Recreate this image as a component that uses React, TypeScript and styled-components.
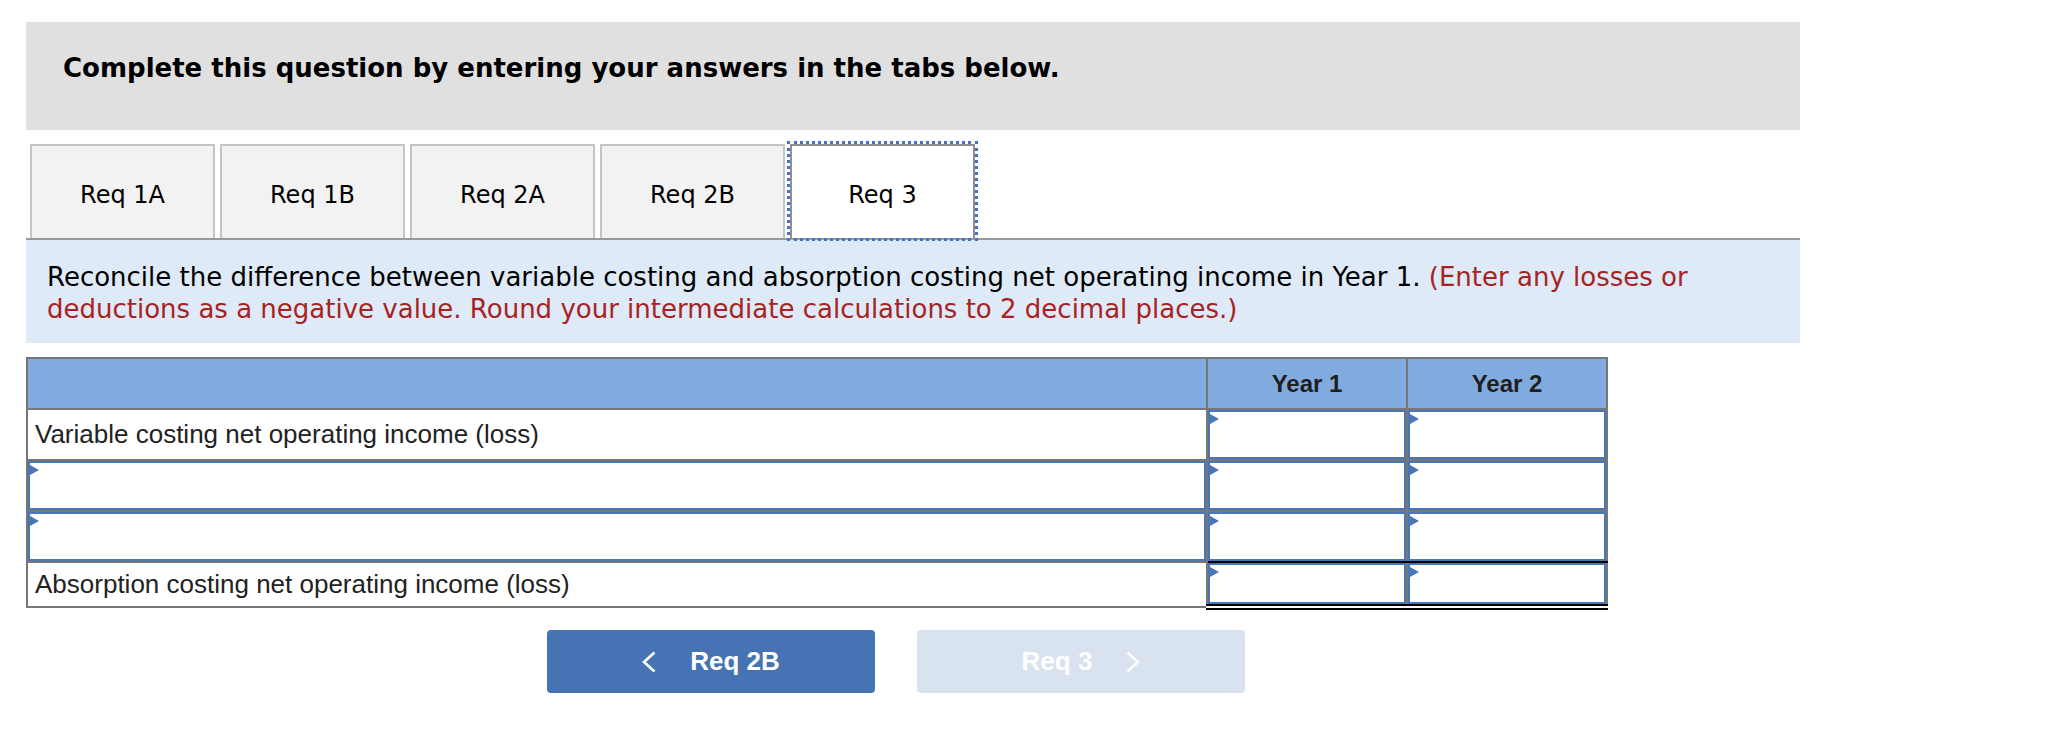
import styled, { createGlobalStyle } from 'styled-components'

const GlobalStyle = createGlobalStyle`
  body {
    margin: 0;
    background: #ffffff;
  }
`

const verdana = `Verdana, "DejaVu Sans", sans-serif`
const arial = `Arial, "Liberation Sans", sans-serif`

const tabs = ['Req 1A', 'Req 1B', 'Req 2A', 'Req 2B', 'Req 3']

const rows = [
  { label: 'Variable costing net operating income (loss)', rule: 'none', h: 49 },
  { label: null, rule: 'none', h: 49 },
  { label: null, rule: 'single', h: 49 },
  { label: 'Absorption costing net operating income (loss)', rule: 'double', h: 41 },
]

const Chevron = ({ dir }: { dir: 'left' | 'right' }) => (
  <svg width="14" height="22" viewBox="0 0 14 22" fill="none">
    <path
      d={dir === 'left' ? 'M12.5 1.5 L2 11 L12.5 20.5' : 'M1.5 1.5 L12 11 L1.5 20.5'}
      stroke="#ffffff"
      strokeWidth="2.6"
      strokeLinejoin="miter"
    />
  </svg>
)

const App = () => {
  return (
    <Page>
      <GlobalStyle />
      <Prompt>Complete this question by entering your answers in the tabs below.</Prompt>

      <TabList>
        {tabs.map((t, i) => (
          <Tab key={t} $active={i === tabs.length - 1}>
            {t}
          </Tab>
        ))}
      </TabList>

      <Instructions>
        Reconcile the difference between variable costing and absorption costing net operating income in Year 1.{' '}
        <Hint>(Enter any losses or deductions as a negative value. Round your intermediate calculations to 2 decimal places.)</Hint>
      </Instructions>

      <Sheet>
        <colgroup>
          <col />
          <col style={{ width: 200 }} />
          <col style={{ width: 200 }} />
        </colgroup>
        <thead>
          <tr>
            <HeadCell />
            <HeadCell>Year 1</HeadCell>
            <HeadCell>Year 2</HeadCell>
          </tr>
        </thead>
        <tbody>
          {rows.map((r, i) => (
            <tr key={i}>
              {r.label ? (
                <LabelCell>{r.label}</LabelCell>
              ) : (
                <EntryCell>
                  <InputBox $h={r.h} />
                </EntryCell>
              )}
              <EntryCell $rule={r.rule}>
                <InputBox $h={r.h} />
              </EntryCell>
              <EntryCell $rule={r.rule}>
                <InputBox $h={r.h} />
              </EntryCell>
            </tr>
          ))}
        </tbody>
      </Sheet>

      <Nav>
        <NavButton>
          <Chevron dir="left" />
          <span>Req 2B</span>
        </NavButton>
        <NavButton $disabled>
          <span>Req 3</span>
          <Chevron dir="right" />
        </NavButton>
      </Nav>
    </Page>
  )
}

const Page = styled.div`
  padding: 22px 0 40px 26px;
  width: 1774px;
`

const Prompt = styled.div`
  box-sizing: border-box;
  height: 108px;
  padding: 31px 37px 0;
  background: #e0e0e0;
  font-family: ${verdana};
  font-weight: bold;
  font-size: 26px;
  line-height: 30px;
  color: #000;
`

const TabList = styled.div`
  display: flex;
  gap: 5px;
  margin-top: 14px;
  padding-left: 4px;
  border-bottom: 2px solid #999999;
`

const Tab = styled.div<{ $active?: boolean }>`
  box-sizing: border-box;
  width: 185px;
  height: 94px;
  padding-top: 6px;
  display: flex;
  align-items: center;
  justify-content: center;
  border: 2px solid ${(p) => (p.$active ? '#8f8f8f' : '#c4c4c4')};
  border-bottom: none;
  background: ${(p) => (p.$active ? '#ffffff' : '#f2f2f2')};
  font-family: ${verdana};
  font-size: 24px;
  color: #000;
  outline: ${(p) => (p.$active ? '3px dotted #4472c4' : 'none')};
  outline-offset: 0;
`

const Instructions = styled.div`
  background: #deeaf7;
  padding: 21px 21px 18px;
  font-family: ${verdana};
  font-size: 26px;
  line-height: 32px;
  color: #000;
`

const Hint = styled.span`
  color: #a8231f;
`

const Sheet = styled.table`
  margin-top: 14px;
  width: 1582px;
  table-layout: fixed;
  border-collapse: collapse;
  border: 2px solid #777777;
  font-family: ${arial};
`

const HeadCell = styled.th`
  height: 49px;
  padding: 0;
  background: #81abdf;
  border: 2px solid #777777;
  font-size: 24px;
  font-weight: bold;
  color: #1e1e1e;
  text-align: center;
`

const LabelCell = styled.td`
  padding: 0 0 0 7px;
  border: 2px solid #777777;
  font-size: 26px;
  color: #222;
  white-space: nowrap;
`

const EntryCell = styled.td<{ $rule?: string }>`
  padding: 0;
  border: 2px solid #777777;
  border-bottom: ${(p) =>
    p.$rule === 'double' ? '6px double #000000' : p.$rule === 'single' ? '2px solid #000000' : '2px solid #777777'};
`

const InputBox = styled.div<{ $h: number }>`
  position: relative;
  box-sizing: border-box;
  height: ${(p) => p.$h}px;
  border: 2px solid #4a75b6;
  background: #ffffff;

  &::before {
    content: '';
    position: absolute;
    top: 2px;
    left: 0;
    border-top: 5.5px solid transparent;
    border-bottom: 5.5px solid transparent;
    border-left: 9px solid #4a75b6;
  }
`

const Nav = styled.div`
  display: flex;
  justify-content: center;
  gap: 42px;
  width: 1740px;
  margin-top: 20px;
`

const NavButton = styled.div<{ $disabled?: boolean }>`
  box-sizing: border-box;
  width: 328px;
  height: 63px;
  display: flex;
  align-items: center;
  justify-content: center;
  gap: 34px;
  border-radius: 4px;
  background: ${(p) => (p.$disabled ? '#d9e3ef' : '#4673b3')};
  font-family: ${arial};
  font-weight: bold;
  font-size: 26px;
  color: #ffffff;
`

export default App
